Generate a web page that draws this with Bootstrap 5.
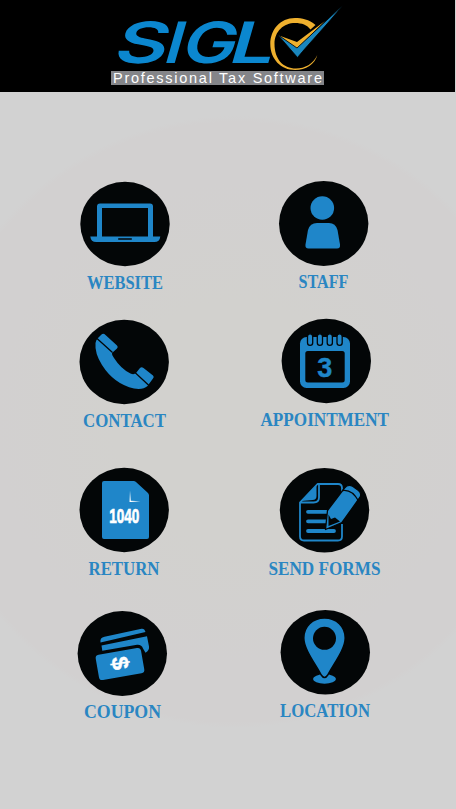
<!DOCTYPE html>
<html lang="en">
<head>
<meta charset="utf-8">
<meta name="viewport" content="width=device-width, initial-scale=1">
<title>SIGLO Professional Tax Software</title>
<link href="https://cdn.jsdelivr.net/npm/bootstrap@5.3.0/dist/css/bootstrap.min.css" rel="stylesheet">
<style>
body{width:456px;height:809px;overflow:hidden;background:radial-gradient(circle at 235px 422px,#d2d1ce 0,#d2d1ce 120px,#d2d0d0 240px,#d2d0d0 300px,#d2d2d2 306px)}
.brand-bar{height:92px;width:455px;background:#000}
.menu-grid{padding:88px 32px 0 24px}
.tile{width:200px;height:118px}
.tile svg,.brand-bar svg{display:block;flex:none}
.gap-a{margin-bottom:20px}.gap-b{margin-bottom:30px}.gap-c{margin-bottom:25px}
.disc{fill:#030607}.b{fill:#1f86c9}.k{fill:#030607}
.ln{fill:none;stroke:#1f86c9}.kl{fill:none;stroke:#030607}
.cap-text{font:bold 17.8px "Liberation Serif",serif;fill:#2a86c2}
</style>
</head>
<body>
<header class="brand-bar d-flex">
<svg width="455" height="92" viewBox="0 0 455 92" role="img" aria-label="SIGLO">
<g transform="translate(0 63.2) skewX(-16)" fill="#0b87cf" font-family="Inter,'Liberation Sans',sans-serif" font-weight="600" font-size="57">
<text x="111.500" y="0" textLength="53" lengthAdjust="spacingAndGlyphs">S</text>
<text x="161.500" y="0" textLength="18" lengthAdjust="spacingAndGlyphs">I</text>
<text x="179" y="0" textLength="54" lengthAdjust="spacingAndGlyphs">G</text>
<text x="226.500" y="0" textLength="45" lengthAdjust="spacingAndGlyphs">L</text>
</g>
<path fill="#efb02e" d="M315.500 25C309 19.500 302 18 295 18C280 18 270.300 30 270.300 44C270.300 59 281 70 295 70C306 70 315 64 317.300 55C313 64 305 68.500 296 68.500C283 68.500 274.500 59 274.500 44C274.500 31 284 23 295 23C302 23 307 25 310.500 29.500Z"/>
<path fill="#efb02e" d="M279 35.500L297 42L325 21L297 48.500Z"/>
<path fill="#1a86bd" stroke="#000" stroke-width=".8" d="M277.500 34.500L297 48L343 5C327 25 311 41 297.500 57.500Z"/>
<rect x="111" y="71" width="213" height="14" fill="#848589"/>
<text x="113" y="83.300" textLength="209" font-family="Liberation Sans,sans-serif" font-size="14.500" fill="#fff">Professional Tax Software</text>
</svg>
</header>
<main class="menu-grid">
<div class="d-flex gap-a">
<a class="tile d-flex flex-column text-decoration-none" href="#website">
<svg width="200" height="90" viewBox="24 180 200 90"><ellipse class="disc" cx="125" cy="224" rx="44.700" ry="42.200"/><path class="b" fill-rule="evenodd" d="M100 203.500h50q3 0 3 3v30h7.300q-.5 5.500-6 5.500h-58q-5.500 0-6-5.500h6.700v-30q0-3 3-3zM102 208v28.500h46V208z"/><rect class="k" x="118" y="238.300" width="14" height="1.500" rx=".7"/></svg>
<svg width="200" height="28" viewBox="24 270 200 28"><text class="cap-text" x="87" y="289.200" textLength="76" lengthAdjust="spacingAndGlyphs">WEBSITE</text></svg></a>
<a class="tile d-flex flex-column text-decoration-none" href="#staff">
<svg width="200" height="90" viewBox="224 180 200 90"><ellipse class="disc" cx="323.700" cy="223.500" rx="44.700" ry="42.500"/><circle class="b" cx="322.300" cy="208" r="11.800"/><path class="b" d="M317 223h12q6.500 0 8.500 7l2.500 14.500q.6 4-3 4h-28.500q-3.600 0-3-4l2.500-14.500q2-7 9-7z"/></svg>
<svg width="200" height="28" viewBox="224 270 200 28"><text class="cap-text" x="298.500" y="288" textLength="50" lengthAdjust="spacingAndGlyphs">STAFF</text></svg></a>
</div>
<div class="d-flex gap-b">
<a class="tile d-flex flex-column text-decoration-none" href="#contact">
<svg width="200" height="90" viewBox="24 318 200 90"><ellipse class="disc" cx="124.200" cy="362" rx="44.700" ry="42.200"/><path class="b" d="M97.500 338.500L101.500 334.500Q103.500 333 105.500 335L117 345.500Q118.500 347 117 348.500L112 353Q111.500 355 114 358Q121 369 130.500 373.500Q134 375 136 373L140 368Q141.500 366.500 143.500 368L153 375.500Q154.500 377 153 378.500L147.500 386Q143 390 134 388.500Q114 384 102 365Q94.500 353 95.500 343Q96 340 97.500 338.500Z"/><path class="kl" stroke-width="1.300" d="M97 338.500L112.500 352.500M135 372.500L150 386.500"/></svg>
<svg width="200" height="28" viewBox="24 408 200 28"><text class="cap-text" x="83" y="427.200" textLength="83" lengthAdjust="spacingAndGlyphs">CONTACT</text></svg></a>
<a class="tile d-flex flex-column text-decoration-none" href="#appointment">
<svg width="200" height="90" viewBox="224 318 200 90"><ellipse class="disc" cx="326.300" cy="361" rx="44.700" ry="42.200"/><rect class="b" x="300" y="337" width="50" height="51" rx="6.500"/><rect class="k" x="305.300" y="351" width="39.400" height="31.500" rx="2.500"/><g class="b" stroke="#030607" stroke-width="1.300"><rect x="307.500" y="333.800" width="5.200" height="11.500" rx="2.600"/><rect x="317.300" y="333.800" width="5.200" height="11.500" rx="2.600"/><rect x="327.200" y="333.800" width="5.200" height="11.500" rx="2.600"/><rect x="337" y="333.800" width="5.200" height="11.500" rx="2.600"/></g><text class="b" x="317.300" y="376.700" font-family="Liberation Sans,sans-serif" font-weight="bold" font-size="27" stroke="#1f86c9" stroke-width=".4">3</text></svg>
<svg width="200" height="28" viewBox="224 408 200 28"><text class="cap-text" x="260.500" y="426.200" textLength="128.500" lengthAdjust="spacingAndGlyphs">APPOINTMENT</text></svg></a>
</div>
<div class="d-flex gap-c">
<a class="tile d-flex flex-column text-decoration-none" href="#return">
<svg width="200" height="90" viewBox="24 466 200 90"><ellipse class="disc" cx="124.200" cy="510" rx="44.700" ry="42.200"/><path class="b" d="M104 481h29.500q1.500 0 2.500 1l12 11q1 1 1 2.500v41.500q0 2-2 2h-43q-2 0-2-2V483q0-2 2-2z"/><path fill="#fff" d="M130 490.500l.8 10.200 9.700.6-9.700.8h-1.300z"/><text x="109.300" y="522.500" textLength="30" lengthAdjust="spacingAndGlyphs" font-family="Liberation Sans,sans-serif" font-weight="bold" font-size="21" fill="#fff" stroke="#fff" stroke-width=".7">1040</text></svg>
<svg width="200" height="28" viewBox="24 556 200 28"><text class="cap-text" x="88.500" y="575" textLength="71" lengthAdjust="spacingAndGlyphs">RETURN</text></svg></a>
<a class="tile d-flex flex-column text-decoration-none" href="#forms">
<svg width="200" height="90" viewBox="224 466 200 90"><ellipse class="disc" cx="324.500" cy="510.200" rx="44.700" ry="42.300"/><path class="ln" stroke-width="1.800" stroke-linejoin="round" d="M300 502.500L317.500 484H338q4 0 4 4v6M342 524v12.500q0 4-4 4h-34q-4 0-4-4v-34h13.500q5.500 0 5.500-5V484"/><path class="b" d="M301.500 501L316.500 485.500V496q0 4-4 4z"/><path class="ln" stroke-width="3.800" stroke-linecap="round" d="M308 511.800h20M308 521.300h18M308 531h26"/><path class="b" stroke="#030607" stroke-width="1.300" stroke-linejoin="round" d="M325.500 529.500L327.500 510.500L344.500 488Q348 483.500 353 486.500L358.500 490.500Q362.500 494 359.500 498L342 522.500Z"/><path class="k" d="M328.500 514.500L331 519L335 517.500L340 521.500L328.500 526Z"/><path class="kl" stroke-width="1.300" d="M342.500 490.500Q352 489 358.500 501"/></svg>
<svg width="200" height="28" viewBox="224 556 200 28"><text class="cap-text" x="268.500" y="575" textLength="112" lengthAdjust="spacingAndGlyphs">SEND FORMS</text></svg></a>
</div>
<div class="d-flex">
<a class="tile d-flex flex-column text-decoration-none" href="#coupon">
<svg width="200" height="90" viewBox="24 609 200 90"><ellipse class="disc" cx="122.300" cy="653.500" rx="44.700" ry="42.500"/><path class="b" d="M100.500 642.500q-.8-5 4-5.800l37-8q3-.5 4 3.300zM101.500 645.500L147 636.300l2 10.200q.5 4-3.500 6.200l-2.500-4.200q-1.500-4.200-6-3.700l-34.700 6z"/><rect class="b" x="-23" y="-12.800" width="46" height="25.600" rx="3.500" transform="translate(120 664) rotate(-10)"/><text transform="translate(120 663) rotate(82)" x="0" y="8" text-anchor="middle" font-family="Liberation Sans,sans-serif" font-weight="bold" font-size="23.500" fill="#fff" stroke="#fff" stroke-width=".4">$</text></svg>
<svg width="200" height="28" viewBox="24 699 200 28"><text class="cap-text" x="84" y="718.200" textLength="77" lengthAdjust="spacingAndGlyphs">COUPON</text></svg></a>
<a class="tile d-flex flex-column text-decoration-none" href="#location">
<svg width="200" height="90" viewBox="224 609 200 90"><ellipse class="disc" cx="325.300" cy="652.200" rx="44.700" ry="42.200"/><ellipse class="b" cx="324.500" cy="679" rx="11.500" ry="4.700"/><path class="b" stroke="#030607" stroke-width="1.500" d="M324.500 618c12 0 20.700 8.600 20.700 20 0 11-11 25-17.400 37q-3.300 5-6.600 0c-6.400-12-17.400-26-17.400-37 0-11.400 8.700-20 20.700-20z"/><circle class="k" cx="324.500" cy="638.300" r="11.500"/></svg>
<svg width="200" height="28" viewBox="224 699 200 28"><text class="cap-text" x="280" y="717.300" textLength="90" lengthAdjust="spacingAndGlyphs">LOCATION</text></svg></a>
</div>
</main>
<script src="https://cdn.jsdelivr.net/npm/bootstrap@5.3.0/dist/js/bootstrap.bundle.min.js"></script>
</body>
</html>
